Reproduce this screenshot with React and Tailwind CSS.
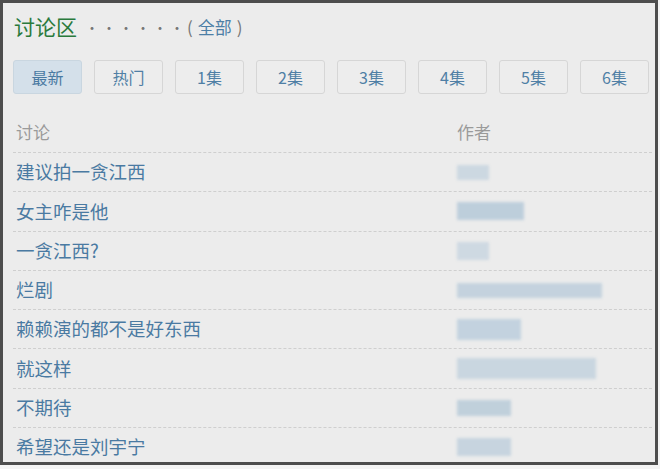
const tabs = ['最新', '热门', '1集', '2集', '3集', '4集', '5集', '6集']

const rows = [
  { title: '建议拍一贪江西', w: 32, h: 15, cls: 'bg-[#c9d6e0]' },
  { title: '女主咋是他', w: 67, h: 18, cls: 'bg-[#b9cbda]' },
  { title: '一贪江西?', w: 32, h: 18, cls: 'bg-[#cbd7e1]' },
  { title: '烂剧', w: 145, h: 15, cls: 'bg-[#c0d0dd]' },
  { title: '赖赖演的都不是好东西', w: 64, h: 21, cls: 'bg-[#bfd0de]' },
  { title: '就这样', w: 139, h: 21, cls: 'bg-[#c6d4df]' },
  { title: '不期待', w: 54, h: 16, cls: 'bg-[#bccdda]' },
  { title: '希望还是刘宇宁', w: 54, h: 18, cls: 'bg-[#c3d2de]' },
]

export default function App() {
  return (
    <div className="w-[660px] h-[469px] bg-[#f4f4f4] overflow-hidden" style={{ fontFamily: '"Microsoft YaHei", "Noto Sans CJK SC", sans-serif' }}>
      <div className="w-[658px] h-[465px] border-[3px] border-[#4d4d4d] bg-[#ececec] pl-[10px] pr-[3px]">
        <div className="flex items-center h-[48px]">
          <span className="text-[21px] text-[#2a7a3c] ml-[1px]">讨论区</span>
          <span className="text-[14px] text-[#777] tracking-[3px] ml-[8px]">······</span>
          <span className="text-[17px] text-[#777]">(</span>
          <span className="text-[17px] text-[#4d7fa6] mx-[5px]">全部</span>
          <span className="text-[17px] text-[#777]">)</span>
        </div>
        <div className="flex gap-[12px] mt-[9px]">
          {tabs.map((t, i) => (
            <div
              key={t}
              className={`w-[69px] h-[34px] rounded-[3px] border flex items-center justify-center text-[16px] ${
                i === 0 ? 'bg-[#d4e0ea] border-[#c9d6e0] text-[#4a7aa2]' : 'bg-[#ededed] border-[#d6d6d6] text-[#4f7fa5]'
              }`}
            >
              {t}
            </div>
          ))}
        </div>
        <div className="flex h-[58px] items-end pb-[8px] text-[17px] text-[#9a9a9a]">
          <span className="w-[444px] pl-[3px]">讨论</span>
          <span>作者</span>
        </div>
        {rows.map((r, i) => (
          <div key={i} className="flex items-center h-[39.3px] border-t border-dashed border-[#cfcfcf] text-[18.5px] text-[#4a7aa2]">
            <span className="w-[444px] pl-[3px]">{r.title}</span>
            <div className={`${r.cls} blur-[1.5px] opacity-90`} style={{ width: r.w, height: r.h }} />
          </div>
        ))}
      </div>
    </div>
  )
}
